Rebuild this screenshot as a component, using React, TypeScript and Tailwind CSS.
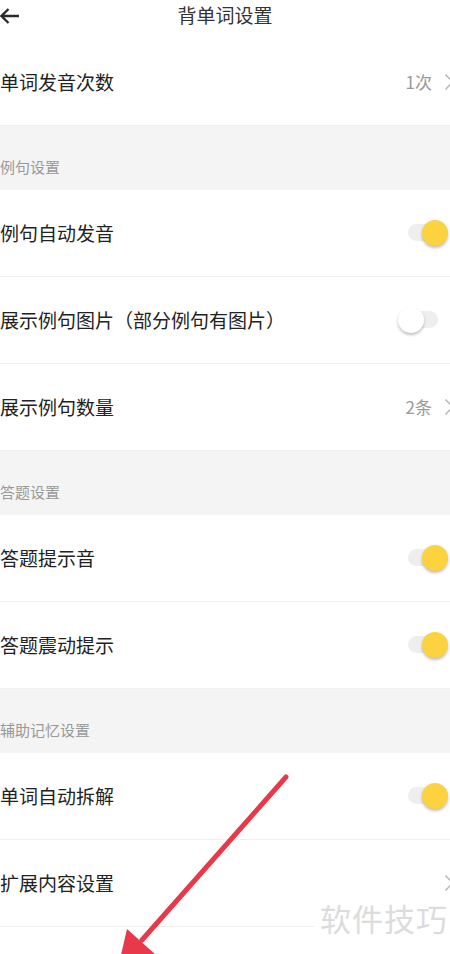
import React from 'react';

type Row =
  | { kind: 'section'; label: string }
  | { kind: 'value'; label: string; value?: string }
  | { kind: 'toggle'; label: string; on: boolean };

const rows: Row[] = [
  { kind: 'value', label: '单词发音次数', value: '1次' },
  { kind: 'section', label: '例句设置' },
  { kind: 'toggle', label: '例句自动发音', on: true },
  { kind: 'toggle', label: '展示例句图片（部分例句有图片）', on: false },
  { kind: 'value', label: '展示例句数量', value: '2条' },
  { kind: 'section', label: '答题设置' },
  { kind: 'toggle', label: '答题提示音', on: true },
  { kind: 'toggle', label: '答题震动提示', on: true },
  { kind: 'section', label: '辅助记忆设置' },
  { kind: 'toggle', label: '单词自动拆解', on: true },
  { kind: 'value', label: '扩展内容设置' },
];

function Toggle({ on }: { on: boolean }) {
  return (
    <div className="relative mr-[2px] h-[26px] w-[50px]">
      <div className="absolute left-[10px] top-[4px] h-[17px] w-[30px] rounded-full bg-[#eeeeee]" />
      <div
        className={`absolute top-0 h-[26px] w-[26px] rounded-full shadow-[0_2px_3px_rgba(0,0,0,0.25)] ${
          on ? 'right-0 bg-[#fcd23f]' : 'left-0 bg-white'
        }`}
      />
    </div>
  );
}

function Chevron() {
  return (
    <svg width="10" height="18" viewBox="0 0 10 18" className="-mr-[4px]">
      <path d="M1.5 1.5 L8.5 9 L1.5 16.5" fill="none" stroke="#b5b5b5" strokeWidth="1.4" />
    </svg>
  );
}

export default function App() {
  return (
    <div
      className="relative h-[954px] w-[450px] overflow-hidden bg-white text-[#222]"
      style={{ fontFamily: '"Noto Sans CJK SC", "Noto Sans", sans-serif' }}
    >
      <header className="relative flex h-[39px] items-start justify-center">
        <svg width="22" height="18" viewBox="0 0 22 18" className="absolute left-[-1px] top-[7px]">
          <path d="M20 9 H2.5 M9.5 2 L2.5 9 L9.5 16" fill="none" stroke="#2a2a2a" strokeWidth="2.3" />
        </svg>
        <h1 className="mt-[1px] text-[19px] leading-[28px] text-[#333]">背单词设置</h1>
      </header>

      <div className="flex flex-col">
        {rows.map((row, i) => {
          if (row.kind === 'section') {
            return (
              <div key={i} className="flex h-[64px] items-end bg-[#f4f4f4] pb-[13px]">
                <span className="text-[15px] leading-[20px] text-[#999]">{row.label}</span>
              </div>
            );
          }
          return (
            <div key={i} className="flex h-[87px] items-center justify-between border-b border-[#efefef]">
              <span className="text-[19px] leading-[26px]">{row.label}</span>
              {row.kind === 'toggle' ? (
                <Toggle on={row.on} />
              ) : (
                <div className="flex items-center gap-[12px]">
                  {row.value && <span className="text-[17px] leading-[24px] text-[#999]">{row.value}</span>}
                  <Chevron />
                </div>
              )}
            </div>
          );
        })}
      </div>

      <div className="absolute left-[314px] top-[898px] whitespace-nowrap bg-white pl-[6px] pr-[10px] text-[31px] leading-[40px] tracking-[1px] text-[#dcdcdc]">
        软件技巧
      </div>

      <svg className="pointer-events-none absolute left-0 top-0" width="450" height="954" viewBox="0 0 450 954">
        <line x1="286" y1="777" x2="142" y2="940" stroke="#e8394a" strokeWidth="5" strokeLinecap="round" />
        <polygon points="118,968 127,929 156,955" fill="#e8394a" />
      </svg>
    </div>
  );
}
